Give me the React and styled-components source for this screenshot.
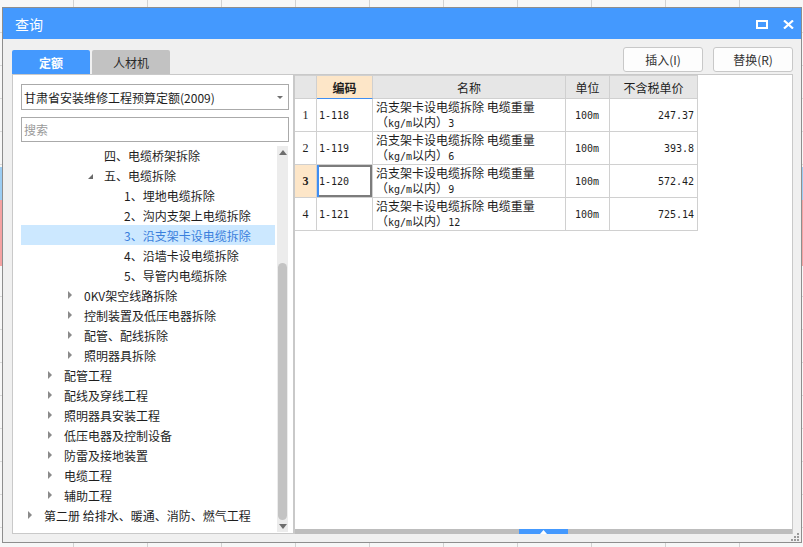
import styled, { createGlobalStyle } from "styled-components";

const GlobalStyle = createGlobalStyle`
  html, body {
    margin: 0;
    padding: 0;
  }
  body {
    font-family: "Noto Sans CJK SC", "Noto Sans", sans-serif;
    font-size: 12px;
    color: #1e1e1e;
    overflow: hidden;
  }
  * {
    box-sizing: border-box;
  }
`;

const treeItems = [
  { level: 3, text: "四、电缆桥架拆除" },
  { level: 3, text: "五、电缆拆除", toggle: "open" },
  { level: 4, text: "1、埋地电缆拆除" },
  { level: 4, text: "2、沟内支架上电缆拆除" },
  { level: 4, text: "3、沿支架卡设电缆拆除", selected: true },
  { level: 4, text: "4、沿墙卡设电缆拆除" },
  { level: 4, text: "5、导管内电缆拆除" },
  { level: 2, text: "0KV架空线路拆除", toggle: "closed" },
  { level: 2, text: "控制装置及低压电器拆除", toggle: "closed" },
  { level: 2, text: "配管、配线拆除", toggle: "closed" },
  { level: 2, text: "照明器具拆除", toggle: "closed" },
  { level: 1, text: "配管工程", toggle: "closed" },
  { level: 1, text: "配线及穿线工程", toggle: "closed" },
  { level: 1, text: "照明器具安装工程", toggle: "closed" },
  { level: 1, text: "低压电器及控制设备", toggle: "closed" },
  { level: 1, text: "防雷及接地装置", toggle: "closed" },
  { level: 1, text: "电缆工程", toggle: "closed" },
  { level: 1, text: "辅助工程", toggle: "closed" },
  { level: 0, text: "第二册 给排水、暖通、消防、燃气工程", toggle: "closed" },
];

const rows = [
  { no: 1, code: "1-118", weight: "3", unit: "100m", price: "247.37" },
  { no: 2, code: "1-119", weight: "6", unit: "100m", price: "393.8" },
  { no: 3, code: "1-120", weight: "9", unit: "100m", price: "572.42", current: true },
  { no: 4, code: "1-121", weight: "12", unit: "100m", price: "725.14" },
];

const App = () => {
  return (
    <Desktop>
      <GlobalStyle />
      <SheetBand $top={167} $height={33} $color="#9ccdf3" />
      <SheetBand $top={200} $height={66} $color="#f5a2a2" />
      <Dialog>
        <TitleBar>
          <Title>查询</Title>
          <WindowButtons>
            <svg width="12" height="9" viewBox="0 0 12 9">
              <rect x="1" y="1" width="10" height="7" fill="none" stroke="#fff" strokeWidth="2" />
            </svg>
            <svg width="11" height="9" viewBox="0 0 11 9">
              <path d="M1 0.5 L10 8.5 M10 0.5 L1 8.5" stroke="#fff" strokeWidth="2.2" />
            </svg>
          </WindowButtons>
        </TitleBar>
        <Body>
          <TopRow>
            <Tabs>
              <Tab $active>定额</Tab>
              <Tab>人材机</Tab>
            </Tabs>
            <Actions>
              <Button>插入(I)</Button>
              <Button>替换(R)</Button>
            </Actions>
          </TopRow>
          <Content>
            <LeftPanel>
              <Select>
                <span>甘肃省安装维修工程预算定额(2009)</span>
                <SelectArrow />
              </Select>
              <Search placeholder="搜索" />
              <Tree>
                <TreeList>
                  {treeItems.map((item, id) => (
                    <TreeRow key={id} $level={item.level} $selected={item.selected}>
                      <Toggle>
                        {item.toggle === "open" && <OpenArrow />}
                        {item.toggle === "closed" && <ClosedArrow />}
                      </Toggle>
                      {item.text}
                    </TreeRow>
                  ))}
                </TreeList>
                <VScroll>
                  <ScrollArrow>
                    <svg width="8" height="5" viewBox="0 0 8 5">
                      <path d="M0 5 L4 0 L8 5 Z" fill="#6e6e6e" />
                    </svg>
                  </ScrollArrow>
                  <VThumb />
                  <ScrollArrow>
                    <svg width="8" height="5" viewBox="0 0 8 5">
                      <path d="M0 0 L4 5 L8 0 Z" fill="#6e6e6e" />
                    </svg>
                  </ScrollArrow>
                </VScroll>
              </Tree>
            </LeftPanel>
            <GridPanel>
              <GridArea>
                <Grid>
                  <HeadCell />
                  <HeadCell $key>编码</HeadCell>
                  <HeadCell>名称</HeadCell>
                  <HeadCell>单位</HeadCell>
                  <HeadCell>不含税单价</HeadCell>
                  {rows.map((r) => (
                    <RowFragment key={r.no} row={r} />
                  ))}
                </Grid>
              </GridArea>
              <HScroll>
                <HThumb>
                  <svg width="7" height="4" viewBox="0 0 7 4">
                    <path d="M0 4 L3.5 0 L7 4 Z" fill="#fff" />
                  </svg>
                </HThumb>
              </HScroll>
            </GridPanel>
          </Content>
        </Body>
        <Grip>
          <svg width="9" height="9" viewBox="0 0 9 9">
            <rect x="6" y="0" width="2" height="2" fill="#9a9a9a" />
            <rect x="3" y="3" width="2" height="2" fill="#9a9a9a" />
            <rect x="6" y="3" width="2" height="2" fill="#9a9a9a" />
            <rect x="0" y="6" width="2" height="2" fill="#9a9a9a" />
            <rect x="3" y="6" width="2" height="2" fill="#9a9a9a" />
            <rect x="6" y="6" width="2" height="2" fill="#9a9a9a" />
          </svg>
        </Grip>
      </Dialog>
    </Desktop>
  );
};

const RowFragment = ({ row }) => {
  return (
    <>
      <NoCell $current={row.current}>{row.no}</NoCell>
      <Cell $mono $selected={row.current}>{row.code}</Cell>
      <NameCell>
        <NameLine>沿支架卡设电缆拆除 电缆重量</NameLine>
        <NameLine>
          （<Mono>kg/m</Mono>以内）<Mono>{row.weight}</Mono>
        </NameLine>
      </NameCell>
      <Cell $mono $center>{row.unit}</Cell>
      <Cell $mono $right>{row.price}</Cell>
    </>
  );
};

const Desktop = styled.div`
  position: relative;
  width: 803px;
  height: 547px;
  background-color: #f7f7f7;
  background-image: repeating-linear-gradient(
      to right,
      transparent 0 73px,
      #d2d2d2 73px 74px
    ),
    repeating-linear-gradient(to bottom, transparent 0 32px, #d9d9d9 32px 33px);
  overflow: hidden;
`;

const SheetBand = styled.div`
  position: absolute;
  left: 0;
  right: 0;
  top: ${(p) => p.$top}px;
  height: ${(p) => p.$height}px;
  background: ${(p) => p.$color};
`;

const Dialog = styled.div`
  position: absolute;
  left: 2px;
  top: 7px;
  width: 800px;
  height: 536px;
  border: 1px solid #8e8e8e;
  background: #f0f0f0;
  display: flex;
  flex-direction: column;
`;

const TitleBar = styled.div`
  height: 31px;
  flex-shrink: 0;
  background: #4499fe;
  display: flex;
  align-items: center;
  justify-content: space-between;
  padding: 0 7px 0 12px;
`;

const Title = styled.div`
  color: #fff;
  font-size: 14px;
`;

const WindowButtons = styled.div`
  display: flex;
  align-items: center;
  gap: 15px;
  padding-top: 1px;
`;

const Body = styled.div`
  flex: 1;
  display: flex;
  flex-direction: column;
  padding: 0 8px 8px 9px;
`;

const TopRow = styled.div`
  height: 35px;
  display: flex;
  justify-content: space-between;
`;

const Tabs = styled.div`
  display: flex;
  gap: 2px;
  align-self: flex-end;
`;

const Tab = styled.div`
  width: 78px;
  height: 24px;
  border-radius: 2px 2px 0 0;
  display: flex;
  align-items: center;
  justify-content: center;
  font-size: 12px;
  background: ${(p) => (p.$active ? "#4499fe" : "#c2c2c2")};
  color: ${(p) => (p.$active ? "#fff" : "#2a2a2a")};
  font-weight: ${(p) => (p.$active ? 600 : 400)};
`;

const Actions = styled.div`
  display: flex;
  gap: 10px;
  margin-top: 8px;
`;

const Button = styled.div`
  width: 80px;
  height: 25px;
  background: #fdfdfd;
  border: 1px solid #c8c8c8;
  border-radius: 3px;
  display: flex;
  align-items: center;
  justify-content: center;
  color: #333;
  font-size: 12px;
`;

const Content = styled.div`
  flex: 1;
  display: flex;
`;

const LeftPanel = styled.div`
  width: 282px;
  background: #fff;
  border: 1px solid #c9c9c9;
  padding: 9px 4px 0 8px;
  display: flex;
  flex-direction: column;
`;

const Select = styled.div`
  height: 26px;
  border: 1px solid #aaaaaa;
  display: flex;
  align-items: center;
  justify-content: space-between;
  padding: 0 5px 0 2px;
  color: #1e1e1e;
`;

const SelectArrow = styled.span`
  width: 0;
  height: 0;
  border-left: 3px solid transparent;
  border-right: 3px solid transparent;
  border-top: 3px solid #707070;
`;

const Search = styled.input`
  height: 25px;
  margin-top: 7px;
  border: 1px solid #aaaaaa;
  outline: none;
  padding: 0 2px;
  font-family: inherit;
  font-size: 12px;
  &::placeholder {
    color: #9a9a9a;
  }
`;

const Tree = styled.div`
  margin-top: 4px;
  height: 386px;
  display: flex;
`;

const TreeList = styled.div`
  flex: 1;
  margin-top: -1px;
`;

const TreeRow = styled.div`
  height: 20px;
  display: flex;
  align-items: center;
  padding-left: ${(p) => 7 + p.$level * 20}px;
  white-space: nowrap;
  background: ${(p) => (p.$selected ? "#cce8ff" : "transparent")};
  color: ${(p) => (p.$selected ? "#3a7fdc" : "#1e1e1e")};
`;

const Toggle = styled.span`
  width: 16px;
  display: flex;
  align-items: center;
`;

const ClosedArrow = styled.span`
  width: 0;
  height: 0;
  border-top: 4px solid transparent;
  border-bottom: 4px solid transparent;
  border-left: 4px solid #8a8a8a;
`;

const OpenArrow = styled.span`
  width: 0;
  height: 0;
  margin-top: 2px;
  border-left: 5px solid transparent;
  border-bottom: 5px solid #6a6a6a;
`;

const VScroll = styled.div`
  width: 11px;
  margin: 0 1px 0 2px;
  background: #ececec;
  display: flex;
  flex-direction: column;
  align-items: center;
`;

const ScrollArrow = styled.div`
  height: 12px;
  display: flex;
  align-items: center;
  justify-content: center;
`;

const VThumb = styled.div`
  width: 9px;
  height: 257px;
  margin-top: 105px;
  border-radius: 5px;
  background: #c3c3c3;
`;

const GridPanel = styled.div`
  flex: 1;
  background: #fff;
  border: 1px solid #c9c9c9;
  border-bottom: none;
  display: flex;
  flex-direction: column;
`;

const GridArea = styled.div`
  flex: 1;
`;

const Grid = styled.div`
  display: grid;
  grid-template-columns: 22px 56px 193px 44px 88px;
  width: 403px;
`;

const HeadCell = styled.div`
  height: 24px;
  border-top: 1px solid #d0d0d0;
  border-right: 1px solid #d0d0d0;
  border-bottom: 1px solid ${(p) => (p.$key ? "#3f8ef2" : "#d0d0d0")};
  background: ${(p) => (p.$key ? "#fde6c8" : "#e6e6e6")};
  font-weight: ${(p) => (p.$key ? 700 : 400)};
  display: flex;
  align-items: center;
  justify-content: center;
  font-size: 12px;
`;

const NoCell = styled.div`
  height: 33px;
  border-right: 1px solid #d0d0d0;
  border-bottom: 1px solid #d0d0d0;
  display: flex;
  align-items: center;
  justify-content: center;
  font-family: "Liberation Serif", serif;
  font-size: 12px;
  background: ${(p) => (p.$current ? "#fde6c8" : "#fff")};
  font-weight: ${(p) => (p.$current ? 700 : 400)};
`;

const Cell = styled.div`
  height: 33px;
  border-right: 1px solid #d0d0d0;
  border-bottom: 1px solid #d0d0d0;
  display: flex;
  align-items: center;
  justify-content: ${(p) => (p.$center ? "center" : p.$right ? "flex-end" : "flex-start")};
  padding: 0 3px 0 2px;
  font-family: ${(p) => (p.$mono ? '"DejaVu Sans Mono", monospace' : "inherit")};
  font-size: ${(p) => (p.$mono ? "10px" : "12px")};
  box-shadow: ${(p) =>
    p.$selected ? "inset 2px 0 0 #3f8ef2, inset 0 0 0 2px #7c7c7c" : "none"};
`;

const NameCell = styled.div`
  height: 33px;
  border-right: 1px solid #d0d0d0;
  border-bottom: 1px solid #d0d0d0;
  display: flex;
  flex-direction: column;
  justify-content: center;
  padding: 0 2px 0 3px;
  font-size: 12px;
  white-space: nowrap;
`;

const NameLine = styled.div`
  line-height: 15px;
`;

const Mono = styled.span`
  font-family: "DejaVu Sans Mono", monospace;
  font-size: 10px;
`;

const HScroll = styled.div`
  height: 5px;
  background: #bdbdbd;
  display: flex;
  justify-content: center;
`;

const HThumb = styled.div`
  width: 49px;
  height: 5px;
  background: #4499fe;
  display: flex;
  align-items: center;
  justify-content: center;
`;

const Grip = styled.div`
  position: absolute;
  right: 1px;
  bottom: 0;
  line-height: 0;
`;

export default App;
